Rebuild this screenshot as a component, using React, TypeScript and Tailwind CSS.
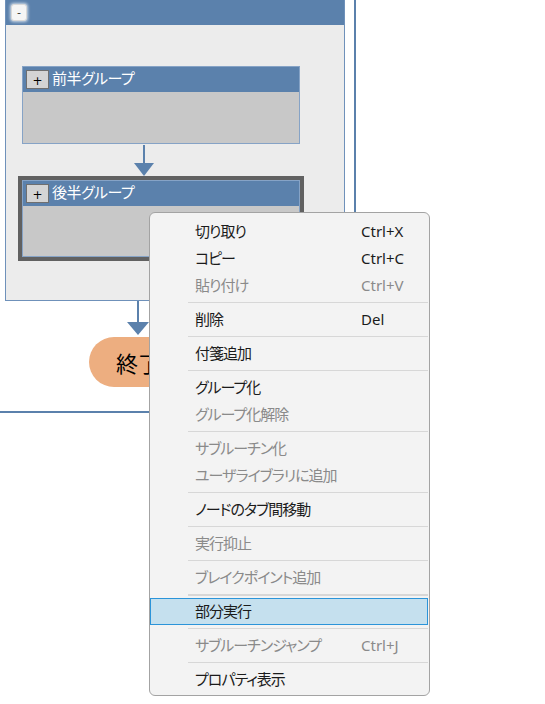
import React from "react";

const JP = "font-['Noto_Sans','Noto_Sans_CJK_JP',sans-serif] [font-feature-settings:'palt'_1]";

type Item = { label: string; shortcut?: string; disabled?: boolean; active?: boolean };
type Entry = Item | { sep: true; thick?: boolean };

const entries: Entry[] = [
  { label: "切り取り", shortcut: "Ctrl+X" },
  { label: "コピー", shortcut: "Ctrl+C" },
  { label: "貼り付け", shortcut: "Ctrl+V", disabled: true },
  { sep: true },
  { label: "削除", shortcut: "Del" },
  { sep: true },
  { label: "付箋追加" },
  { sep: true },
  { label: "グループ化" },
  { label: "グループ化解除", disabled: true },
  { sep: true },
  { label: "サブルーチン化", disabled: true },
  { label: "ユーザライブラリに追加", disabled: true },
  { sep: true },
  { label: "ノードのタブ間移動" },
  { sep: true },
  { label: "実行抑止", disabled: true },
  { sep: true },
  { label: "ブレイクポイント追加", disabled: true },
  { sep: true, thick: true },
  { label: "部分実行", active: true },
  { sep: true },
  { label: "サブルーチンジャンプ", shortcut: "Ctrl+J", disabled: true },
  { sep: true },
  { label: "プロパティ表示" },
];

function PlusButton() {
  return (
    <div className="ml-[3px] mt-[3px] flex h-[19px] w-[23px] shrink-0 items-end justify-center border border-[#6f6f6f] bg-[#d4d4d4] font-['DejaVu_Sans',sans-serif] text-[12px] leading-[14px] text-black">
      +
    </div>
  );
}

function Group({ title, bodyH }: { title: string; bodyH: string }) {
  return (
    <div className="w-[278px] border border-[#86a3c6] bg-[#c8c8c8]">
      <div className={`flex h-[25px] items-start bg-[#5b81ac] ${JP}`}>
        <PlusButton />
        <span className="ml-[3px] mt-[1px] text-[15px] leading-[20px] tracking-[-0.5px] text-white">{title}</span>
      </div>
      <div className={bodyH} />
    </div>
  );
}

function Arrow({ h, w }: { h: number; w: number }) {
  const c = w / 2;
  return (
    <svg width={w} height={h} viewBox={`0 0 ${w} ${h}`} className="block">
      <rect x={c - 1} y={0} width={2} height={h - 10} fill="#5b81ac" />
      <polygon points={`0,${h - 13} ${w},${h - 13} ${c},${h}`} fill="#5b81ac" />
    </svg>
  );
}

export default function App() {
  return (
    <div className="relative h-[704px] w-[545px] overflow-hidden bg-white">
      <div className="h-[413px] w-[356px] border-b-2 border-r-2 border-[#5b81ac]">
        {/* outer group */}
        <div className="ml-[5px] w-[340px] border-x border-b border-[#6f91ba] bg-[#ececec]">
          <div className="flex h-[25px] items-start bg-[#5b81ac]">
            <div className="ml-[5px] mt-[4px] flex h-[17px] w-[16px] items-end justify-center rounded-[3px] border border-[#d8d8d8] bg-[#f5f5f5] font-['DejaVu_Sans',sans-serif] text-[11px] leading-[14px] text-[#333] shadow-[0_0_3px_1px_rgba(255,255,255,0.7)]">
              -
            </div>
          </div>
          <div className="h-[275px] pt-[41px]">
            <div className="ml-[16px]">
              <Group title="前半グループ" bodyH="h-[51px]" />
            </div>
            <div className="ml-[128px] mt-[1px]">
              <Arrow h={31} w={20} />
            </div>
            <div className="ml-[12px] w-[286px] border-4 border-[#616161]">
              <Group title="後半グループ" bodyH="h-[50px]" />
            </div>
          </div>
        </div>
        <div className="ml-[127px]">
          <Arrow h={34} w={22} />
        </div>
        <div className="ml-[89px] mt-[2px] flex h-[50px] w-[98px] items-center justify-center rounded-full bg-[#edae80]">
          <span className="font-['Noto_Sans_CJK_JP',sans-serif] text-[22px] leading-none text-black">終了</span>
        </div>
      </div>

      {/* context menu */}
      <div className={`absolute left-[149px] top-[212px] w-[281px] rounded-[6px] border border-[#a3a3a3] bg-[#f3f3f3] pb-[2px] pt-[5px] ${JP}`}>
        {entries.map((e, i) =>
          "sep" in e ? (
            <div key={i} className="flex h-[7px] items-center pl-[38px] pr-[1px]">
              <div className={`w-full ${e.thick ? "h-[2px]" : "h-px"} bg-[#d7d7d7]`} />
            </div>
          ) : (
            <div
              key={i}
              className={`flex h-[27px] items-center text-[15px] ${
                e.active ? "mr-[1px] border border-[#2b94d9] bg-[#c5e0ee] pl-[44px]" : "pl-[45px]"
              } ${e.disabled ? "text-[#8a8a8a]" : "text-[#1b1b1b]"}`}
            >
              <span className="w-[166px] whitespace-nowrap tracking-[-1px]">{e.label}</span>
              {e.shortcut && <span className="whitespace-nowrap">{e.shortcut}</span>}
            </div>
          )
        )}
      </div>
    </div>
  );
}
